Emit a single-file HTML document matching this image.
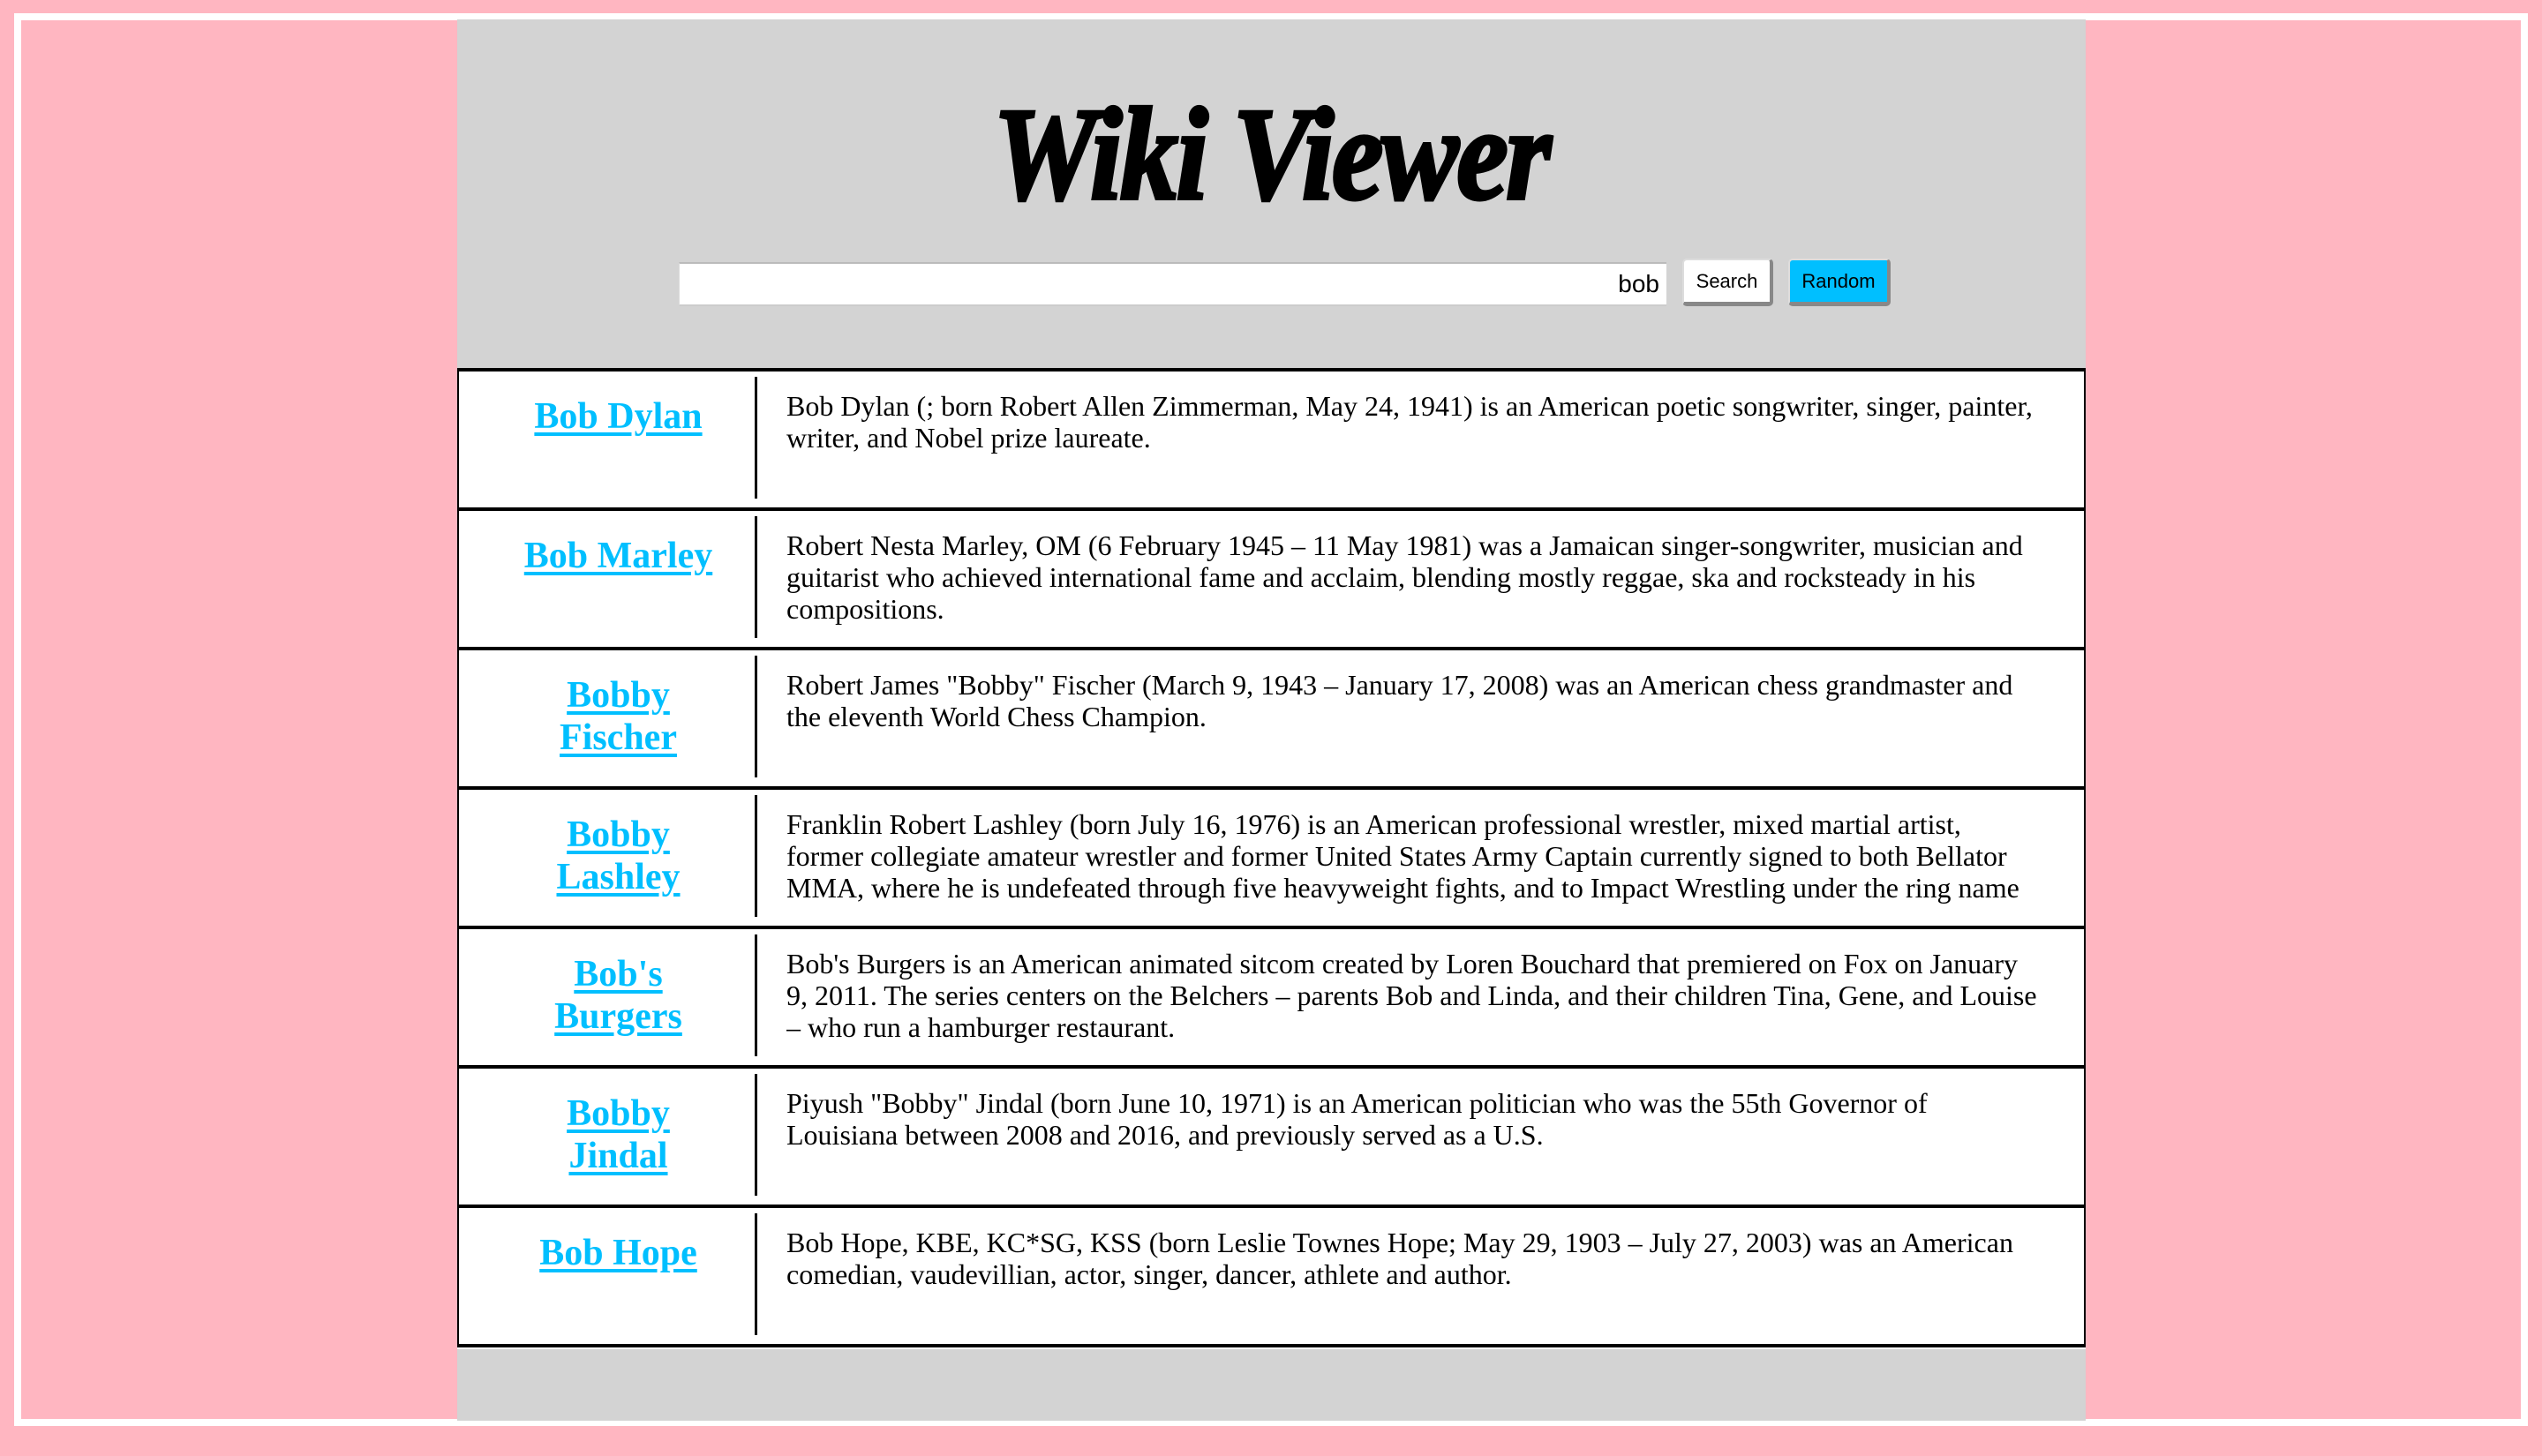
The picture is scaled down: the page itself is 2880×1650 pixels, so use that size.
<!DOCTYPE html>
<html><head><meta charset="utf-8"><style>
*{margin:0;padding:0;box-sizing:border-box}
html,body{width:2880px;height:1650px;overflow:hidden;background:#FFB6C1;position:relative}
.frame{position:absolute;left:16px;top:15px;width:2848px;height:1601px;border:8px solid #fff}
.main{position:absolute;left:518px;top:22px;width:1845px;height:1588px;background:#D3D3D3}
h1{position:absolute;left:0;width:2880px;top:100px;text-align:center;font:italic bold 150px/1 "Liberation Serif",serif;transform:scaleX(0.88);transform-origin:1440px 0;color:#000;letter-spacing:-3px;-webkit-text-stroke:4px #000}
.inp{position:absolute;left:769px;top:297px;width:1119px;height:50px;background:#fff;border-top:2px solid #bbb;border-bottom:2px solid #ccc;border-left:1px solid #ddd;font:28px/46px "Liberation Sans",sans-serif;text-align:right;padding-right:8px;color:#000}
.btn{position:absolute;top:293px;height:54px;border-radius:5px;font:22px/48px "Liberation Sans",sans-serif;text-align:center;color:#000;border:2px solid #ddd;border-right:4px solid #888;border-bottom:5px solid #888}
.row{position:absolute;left:518px;width:1845px;height:160px;background:#fff;border-top:4px solid #000;border-left:2px solid #000;border-right:2px solid #000}
.row.last{border-bottom:4px solid #000;height:162px}
.vl{position:absolute;left:335px;top:6px;width:3px;height:138px;background:#000}
.lk{position:absolute;left:13px;width:335px;top:27px;text-align:center;font:bold 42px/48px "Liberation Serif",serif;color:#00BFFF;text-decoration:underline;text-decoration-thickness:4px;text-underline-offset:5px}
.tx{position:absolute;left:371px;top:21px;width:1423px;height:108px;overflow:hidden;font:32px/36px "Liberation Serif",serif;color:#000}
</style></head><body>
<div class="frame"></div>
<div class="main"></div>
<h1>Wiki Viewer</h1>
<div class="inp">bob</div>
<div class="btn" style="left:1906px;width:103px;background:#fff">Search</div>
<div class="btn" style="left:2026px;width:116px;background:#00BFFF">Random</div>

<div class="row" style="top:417px"><div class="lk">Bob Dylan</div><div class="vl"></div><div class="tx">Bob Dylan (; born Robert Allen Zimmerman, May 24, 1941) is an American poetic songwriter, singer, painter, writer, and Nobel prize laureate.</div></div>
<div class="row" style="top:575px"><div class="lk">Bob Marley</div><div class="vl"></div><div class="tx">Robert Nesta Marley, OM (6 February 1945 – 11 May 1981) was a Jamaican singer-songwriter, musician and guitarist who achieved international fame and acclaim, blending mostly reggae, ska and rocksteady in his compositions.</div></div>
<div class="row" style="top:733px"><div class="lk">Bobby<br>Fischer</div><div class="vl"></div><div class="tx">Robert James "Bobby" Fischer (March 9, 1943 – January 17, 2008) was an American chess grandmaster and the eleventh World Chess Champion.</div></div>
<div class="row" style="top:891px"><div class="lk">Bobby<br>Lashley</div><div class="vl"></div><div class="tx">Franklin Robert Lashley (born July 16, 1976) is an American professional wrestler, mixed martial artist, former collegiate amateur wrestler and former United States Army Captain currently signed to both Bellator MMA, where he is undefeated through five heavyweight fights, and to Impact Wrestling under the ring name Lashley.</div></div>
<div class="row" style="top:1049px"><div class="lk">Bob's<br>Burgers</div><div class="vl"></div><div class="tx">Bob's Burgers is an American animated sitcom created by Loren Bouchard that premiered on Fox on January 9, 2011. The series centers on the Belchers – parents Bob and Linda, and their children Tina, Gene, and Louise – who run a hamburger restaurant.</div></div>
<div class="row" style="top:1207px"><div class="lk">Bobby<br>Jindal</div><div class="vl"></div><div class="tx">Piyush "Bobby" Jindal (born June 10, 1971) is an American politician who was the 55th Governor of Louisiana between 2008 and 2016, and previously served as a U.S.</div></div>
<div class="row last" style="top:1365px"><div class="lk">Bob Hope</div><div class="vl"></div><div class="tx">Bob Hope, KBE, KC*SG, KSS (born Leslie Townes Hope; May 29, 1903 – July 27, 2003) was an American comedian, vaudevillian, actor, singer, dancer, athlete and author.</div></div>
<div style="position:absolute;left:518px;top:1527px;width:1845px;height:2px;background:#fff"></div>
</body></html>
